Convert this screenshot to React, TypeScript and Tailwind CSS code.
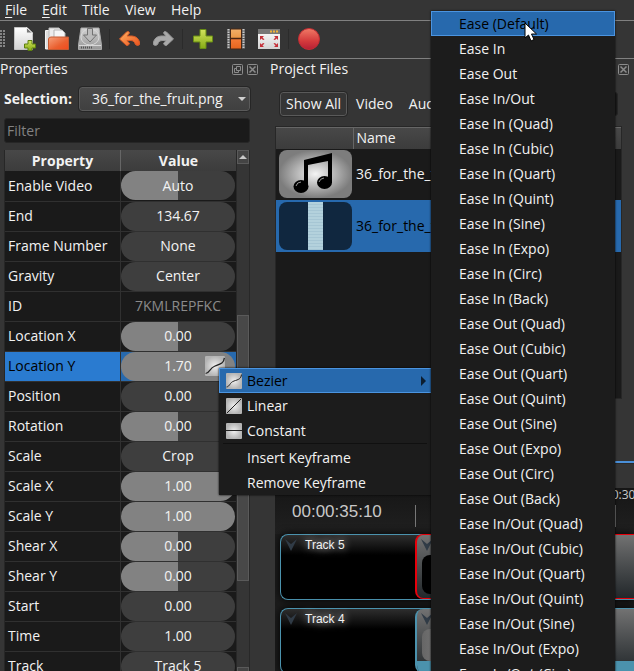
import type { ReactNode } from "react";

type Row = { name: string; value: string; fill?: "half" | "full" | "plain" | "none"; active?: boolean };

const rows: Row[] = [
  { name: "Enable Video", value: "Auto", fill: "half" },
  { name: "End", value: "134.67" },
  { name: "Frame Number", value: "None" },
  { name: "Gravity", value: "Center" },
  { name: "ID", value: "7KMLREPFKC", fill: "none" },
  { name: "Location X", value: "0.00", fill: "half" },
  { name: "Location Y", value: "1.70", fill: "full", active: true },
  { name: "Position", value: "0.00" },
  { name: "Rotation", value: "0.00", fill: "half" },
  { name: "Scale", value: "Crop" },
  { name: "Scale X", value: "1.00", fill: "full" },
  { name: "Scale Y", value: "1.00", fill: "full" },
  { name: "Shear X", value: "0.00", fill: "half" },
  { name: "Shear Y", value: "0.00", fill: "half" },
  { name: "Start", value: "0.00" },
  { name: "Time", value: "1.00" },
  { name: "Track", value: "Track 5" },
];

const kinds = ["Quad", "Cubic", "Quart", "Quint", "Sine", "Expo", "Circ", "Back"];
const eases = [
  "Ease In",
  "Ease Out",
  "Ease In/Out",
  ...kinds.map((k) => `Ease In (${k})`),
  ...kinds.map((k) => `Ease Out (${k})`),
  ...kinds.map((k) => `Ease In/Out (${k})`),
];

const pillStyles = {
  half: "bg-[linear-gradient(90deg,#828282_50%,#3e3e3e_50%)]",
  full: "bg-[#828282]",
  plain: "bg-[#3e3e3e]",
  none: "text-[#8a8a8a]",
};

function Tool({ label, children }: { label: string; children: ReactNode }) {
  return (
    <button aria-label={label} className="flex h-8 w-[33px] items-center justify-center">
      <svg width="24" height="24" viewBox="0 0 24 24">{children}</svg>
    </button>
  );
}

function Separator() {
  return <div className="mx-[3px] h-5 w-px bg-[#2b2b2b]" />;
}

function Toolbar() {
  return (
    <div className="flex h-[38px] shrink-0 items-center border-b border-[#808080] pb-px">
      <svg width="7" height="18" viewBox="0 0 7 18" fill="#858585">
        {[0, 3, 6, 9, 12, 15].map((y) => (
          <g key={y}>
            <rect x="0" y={y} width="2" height="2" />
            <rect x="3" y={y} width="2" height="2" />
          </g>
        ))}
      </svg>
      <Tool label="New Project">
        <defs>
          <linearGradient id="paper" x1="0" y1="0" x2="0" y2="1">
            <stop offset="0" stopColor="#fff" />
            <stop offset="1" stopColor="#d2d2d2" />
          </linearGradient>
          <linearGradient id="lime" x1="0" y1="0" x2="0" y2="1">
            <stop offset="0" stopColor="#d2e35c" />
            <stop offset="1" stopColor="#86ab16" />
          </linearGradient>
        </defs>
        <path d="M2.500 0.500H15L20.500 6V22.500H2.500Z" fill="url(#paper)" stroke="#c4c4c4" />
        <path d="M14.500 0.500V6H20.500Z" fill="#777" stroke="#eee" />
        <path d="M16 13.500H20V17H23.500V21H20V23.500H16V21H12.500V17H16Z" fill="url(#lime)" stroke="#5d800f" />
      </Tool>
      <Tool label="Open Project">
        <defs>
          <linearGradient id="folder" x1="0" y1="0" x2="1" y2="1">
            <stop offset="0" stopColor="#f7a27c" />
            <stop offset="0.600" stopColor="#ea6030" />
            <stop offset="1" stopColor="#f2491b" />
          </linearGradient>
        </defs>
        <path d="M0.500 3.500H6V22H0.500Z" fill="#ddd" stroke="#f3f3f3" />
        <path d="M4 1H14L18 5V12H4Z" fill="#ececec" stroke="#bbb" />
        <path d="M9 3H17L20 6V13H9Z" fill="#f6f6f6" stroke="#b5b5b5" />
        <path d="M3.500 22.500V12Q4 10 6 10H23.500V22.500Z" fill="url(#folder)" stroke="#c45a32" />
      </Tool>
      <Tool label="Save Project">
        <defs>
          <linearGradient id="disk" x1="0" y1="0" x2="0" y2="1">
            <stop offset="0" stopColor="#d2d2d2" />
            <stop offset="1" stopColor="#989898" />
          </linearGradient>
        </defs>
        <path d="M3 1H21L23.500 18V22.500H0.500V18Z" fill="url(#disk)" stroke="#aaa" />
        <ellipse cx="12" cy="10" rx="9" ry="8" fill="none" stroke="#d8d8d8" />
        <path d="M9.500 1.500H14.500V8H18.500L12 15L5.500 8H9.500Z" fill="#bbb" stroke="#727272" />
        <path d="M1 18.500H23" stroke="#d8d8d8" />
        <path d="M3 20.500H14" stroke="#555" strokeWidth="2" strokeDasharray="1 1" />
      </Tool>
      <Separator />
      <Tool label="Undo">
        <defs>
          <linearGradient id="undo" x1="0" y1="0" x2="1" y2="1">
            <stop offset="0" stopColor="#ffb463" />
            <stop offset="1" stopColor="#ea501c" />
          </linearGradient>
        </defs>
        <path d="M1.500 12L8.500 5Q11 3.500 11.500 6L9 9H14Q20 9.500 21.500 15Q22.500 18.500 19.500 18.500Q17 18 16.500 15.500Q15.500 13.500 13 13.500H9L11.500 16.500Q10.500 19 8.500 18.500Z" fill="url(#undo)" stroke="#d65a28" />
      </Tool>
      <Tool label="Redo">
        <path d="M22.500 12L15.500 5Q13 3.500 12.500 6L15 9H10Q4 9.500 2.500 15Q1.500 18.500 4.500 18.500Q7 18 7.500 15.500Q8.500 13.500 11 13.500H15L12.500 16.500Q13.500 19 15.500 18.500Z" fill="#a9a9a9" stroke="#969696" />
      </Tool>
      <Separator />
      <Tool label="Import Files">
        <path d="M9 2.500H15V9H21.500V15H15V21.500H9V15H2.500V9H9Z" fill="url(#lime)" stroke="#688c15" />
      </Tool>
      <Tool label="Choose Profile">
        <defs>
          <linearGradient id="film" x1="0" y1="0" x2="0" y2="1">
            <stop offset="0" stopColor="#f3b06a" />
            <stop offset="0.500" stopColor="#eb9542" />
            <stop offset="0.510" stopColor="#f47a35" />
            <stop offset="1" stopColor="#e6641e" />
          </linearGradient>
        </defs>
        <path d="M3 2H21V22H3Z" fill="#555" />
        <path d="M4.500 2V22M19.500 2V22" stroke="#c9c9c9" strokeWidth="2" strokeDasharray="1.500 1" />
        <path d="M6.500 2H17.500V22H6.500Z" fill="url(#film)" stroke="#442819" />
        <path d="M6 11.500H18" stroke="#4a2613" strokeWidth="1.500" />
      </Tool>
      <Tool label="Fullscreen">
        <path d="M1 2H23V22H1Z" fill="url(#paper)" />
        <path d="M1 2H23V7H1Z" fill="#777" />
        <path d="M13 4.500H21" stroke="#f0b43a" strokeWidth="2" strokeDasharray="2 1" />
        <path d="M3 9H7L5.500 10.500L7.500 12.500L6 13L4.500 11.500L3 13ZM21 9H17L18.500 10.500L16.500 12.500L18 13L19.500 11.500L21 13ZM3 20H7L5.500 18.500L7.500 16.500L6 16L4.500 17.500L3 16ZM21 20H17L18.500 18.500L16.500 16.500L18 16L19.500 17.500L21 16Z" fill="#c42f38" />
      </Tool>
      <Separator />
      <Tool label="Export Video">
        <defs>
          <linearGradient id="rec" x1="0" y1="0" x2="0" y2="1">
            <stop offset="0" stopColor="#f07a66" />
            <stop offset="0.600" stopColor="#d43a3c" />
            <stop offset="1" stopColor="#b51f35" />
          </linearGradient>
        </defs>
        <circle cx="12" cy="12" r="10.500" fill="url(#rec)" stroke="#c22c33" />
      </Tool>
    </div>
  );
}

function DockClose() {
  return (
    <button aria-label="Close panel">
      <svg width="11" height="11" viewBox="0 0 11 11" fill="none" stroke="#8c8c8c">
        <rect x="0.500" y="0.500" width="10" height="10" rx="1" />
        <path d="M2.500 2.500L8.500 8.500M8.500 2.500L2.500 8.500" strokeWidth="1.500" />
      </svg>
    </button>
  );
}

function DockFloat() {
  return (
    <button aria-label="Float panel">
      <svg width="11" height="11" viewBox="0 0 11 11" fill="none" stroke="#8c8c8c">
        <rect x="0.500" y="0.500" width="10" height="10" rx="1" />
        <path d="M4.500 2.500H8.500V6.500H4.500ZM4.500 4.500H2.500V8.500H6.500V6.500" />
      </svg>
    </button>
  );
}

function CurveIcon({ d, className }: { d: string; className: string }) {
  return (
    <svg viewBox="0 0 16 16" className={className}>
      <defs>
        <radialGradient id="glow">
          <stop offset="0" stopColor="#f0f0f0" />
          <stop offset="1" stopColor="#b4b4b4" />
        </radialGradient>
      </defs>
      <rect width="16" height="16" rx="1" fill="url(#glow)" />
      <path d={d} fill="none" stroke="#222" strokeWidth="1" />
    </svg>
  );
}

const bezier = "M0.500 14C4 13.500 3.500 9.500 8 8C12.500 6.500 15 6 15.500 1.500";

function Properties() {
  return (
    <section className="flex w-[258px] shrink-0 flex-col">
      <header className="flex h-5 shrink-0 items-center gap-1">
        <h2 className="flex-1">Properties</h2>
        <DockFloat />
        <DockClose />
      </header>
      <div className="mt-2 mr-2 flex h-6 shrink-0 items-center pl-1">
        <label htmlFor="selection" className="w-[75px] font-bold">Selection:</label>
        <div className="relative flex-1">
          <select id="selection" className="block h-6 w-full appearance-none rounded-[3px] border border-[#5a5a5a] bg-linear-to-b from-[#4a4a4a] to-[#404040] pl-3 outline outline-[#262626]">
            <option>36_for_the_fruit.png</option>
          </select>
          <svg width="8" height="4" viewBox="0 0 8 4" className="pointer-events-none absolute top-2.5 right-1" fill="#d0d0d0"><path d="M0 0H8L4 4Z" /></svg>
        </div>
      </div>
      <input aria-label="Filter" placeholder="Filter" className="mt-[7px] mr-2 ml-1 h-[25px] shrink-0 rounded-[3px] border border-[#262626] bg-[#1a1a1a] px-0.5 placeholder:text-[#828282]" />
      <div className="mt-[7px] mr-2 ml-1 flex min-h-0 flex-1 overflow-hidden border-l border-[#272727]">
        <div className="min-w-0 flex-1">
          <table className="w-full table-fixed border-collapse bg-[#1a1a1a]">
            <thead>
              <tr className="h-[21px] bg-linear-to-b from-[#484848] to-[#3c3c3c]">
                <th className="h-[21px] border-r border-[#666] p-0 leading-5">Property</th>
                <th className="p-0 leading-5">Value</th>
              </tr>
            </thead>
            <tbody>
              {rows.map((r) => (
                <tr key={r.name} className={r.active ? "h-[30px] bg-[#2769ad] text-black" : "h-[30px]"}>
                  <td className={`border-r border-b border-[#303030] p-0 pl-[3px] leading-5 ${r.active ? "bg-[#2a7bd0]" : ""}`}>{r.name}</td>
                  <td className="border-b border-[#303030] p-0 pr-px">
                    <div className={`flex h-[29px] items-center justify-center rounded-full text-[#f2f2f2] ${pillStyles[r.fill ?? "plain"]}`}>
                      {r.active ? (
                        <div className="grid flex-1 grid-cols-[1fr_auto_1fr] items-center">
                          <span />
                          <span>{r.value}</span>
                          <CurveIcon d={bezier} className="mr-[10px] size-5 justify-self-end" />
                        </div>
                      ) : (
                        <span className={r.fill === "none" ? "text-[#8a8a8a]" : ""}>{r.value}</span>
                      )}
                    </div>
                  </td>
                </tr>
              ))}
            </tbody>
          </table>
        </div>
        <div className="flex w-[14px] shrink-0 flex-col border-x border-[#282828] bg-[#353535]">
          <button aria-label="Scroll up" className="flex h-[14px] items-center justify-center border border-[#5a5a5a] bg-[#444]">
            <svg width="8" height="4" viewBox="0 0 8 4" fill="#c8c8c8"><path d="M0 4H8L4 0Z" /></svg>
          </button>
          <div className="h-[151px]" />
          <div className="h-[266px] border border-[#5a5a5a] bg-[#484848]" />
          <div className="min-h-0 flex-1" />
          <div className="h-1 border border-b-0 border-[#5a5a5a] bg-[#444]" />
        </div>
      </div>
    </section>
  );
}

function ProjectFiles() {
  return (
    <section>
      <header className="flex h-5 items-center pr-[5px] pl-3">
        <h2 className="flex-1">Project Files</h2>
        <DockClose />
      </header>
      <div className="mt-[13px] mr-4 ml-[22px] flex h-6 gap-0.5">
        <button className="rounded-[3px] border border-[#5a5a5a] px-[5px] outline outline-[#262626]">Show All</button>
        <button className="px-[7px]">Video</button>
        <button className="px-[7px]">Audio</button>
        <input aria-label="Search files" className="min-w-0 flex-1 rounded-[3px] border border-[#262626] bg-[#1a1a1a]" />
      </div>
      <div className="mt-[10px] mr-3 ml-[17px] h-[273px] border border-[#272727] bg-[#1a1a1a]">
        <table className="w-full table-fixed border-collapse">
          <thead>
            <tr className="bg-linear-to-b from-[#484848] to-[#3c3c3c] text-left">
              <th className="h-[21px] w-[77px] border-t border-r border-[#666] p-0" aria-label="Thumbnail" />
              <th className="h-[21px] border-t border-[#666] p-0 pl-[3px] leading-5 font-normal">Name</th>
            </tr>
          </thead>
          <tbody>
            <tr className="h-[51px]">
              <td className="p-0 pl-[3px]">
                <svg width="73" height="48" viewBox="0 0 73 48" className="block">
                  <defs>
                    <radialGradient id="sheen">
                      <stop offset="0" stopColor="#f4f4f4" />
                      <stop offset="1" stopColor="#7d7d7d" />
                    </radialGradient>
                  </defs>
                  <rect width="73" height="48" rx="8" fill="url(#sheen)" />
                  <path d="M25 10L53 3V33H49V11L29 15V37H25Z" />
                  <ellipse cx="22" cy="36.500" rx="7.500" ry="6.500" />
                  <ellipse cx="45.500" cy="32.500" rx="7.500" ry="6.500" />
                  <path d="M17 36Q18 32 22 32M40 32Q41 28.500 45 28" fill="none" stroke="#999" />
                </svg>
              </td>
              <td className="overflow-hidden p-0 pl-[3px] whitespace-nowrap">36_for_the_fruit.mp3</td>
            </tr>
            <tr className="h-[52px] bg-[#2769ad] text-black">
              <td className="p-0 pl-[3px]">
                <div className="flex h-12 w-[73px] justify-center overflow-hidden rounded-lg bg-[#10273f]">
                  <div className="w-[15px] bg-[repeating-linear-gradient(#b3d1dc_0_2px,#a6c6d4_2px_3px)]" />
                </div>
              </td>
              <td className="overflow-hidden p-0 pl-[3px] whitespace-nowrap">36_for_the_fruit.png</td>
            </tr>
          </tbody>
        </table>
      </div>
    </section>
  );
}

function Arrow() {
  return (
    <svg width="12" height="12" viewBox="0 0 12 12" fill="#303b46"><path d="M0 0L6 12L12 0L6 5Z" /></svg>
  );
}

function Track({ name, selected }: { name: string; selected?: boolean }) {
  return (
    <div className="flex h-[66px] shrink-0 rounded-l-lg border border-r-0 border-[#4b92ad] bg-black bg-[linear-gradient(#2e2e2e,#000_20px)] shadow-[0_0_8px_#000]">
      <div className="flex w-[134px] shrink-0 gap-2 pt-1 pl-1">
        <Arrow />
        <h3 className="font-['Liberation_Sans',sans-serif] text-xs leading-3 [text-shadow:0_0_8px_#fff]">{name}</h3>
      </div>
      <div className={`flex flex-1 flex-col overflow-hidden rounded-l-lg border-r-0 bg-linear-to-b from-[#727272] to-[#23282b] ${selected ? "-mt-px h-[65px] border-y border-l-2 border-red-600" : "border-l-2 border-[#4b92ad]"}`}>
        <div className="pt-1 pl-1"><Arrow /></div>
        <div className={`mt-1 ml-[5px] w-16 flex-1 rounded-lg ${selected ? "mb-1 bg-black" : "bg-linear-to-r from-[#666] to-[#aaa]"}`} />
        {!selected && <div className="h-3 bg-[#4b92ad]" />}
      </div>
    </div>
  );
}

function Timeline() {
  return (
    <section className="mt-[62px] flex min-h-0 flex-1 flex-col">
      <div className="ml-[17px] h-[3px] shrink-0 border-b border-[#2a2a2a] bg-[#4a8fd8]" />
      <div className="mt-6 ml-[17px] flex min-h-0 flex-1 flex-col overflow-hidden bg-[#1c1c1c]">
        <div className="flex h-[46px] shrink-0 bg-linear-to-b from-[#161616] to-[#202020] text-[#c8c8c8]">
          <div className="w-[140px] shrink-0 pt-[14px] pl-[17px] font-['Liberation_Sans',sans-serif] text-[17px] leading-5">00:00:35:10</div>
          <div className="mt-[17px] h-[22px] w-[200px] shrink-0 border-l border-[#777]" />
          <div className="relative mt-[17px] h-[22px] flex-1 border-l border-[#777]">
            <span className="absolute -top-4 -left-7 text-xs leading-3">00:00:30</span>
          </div>
        </div>
        <div className="flex flex-col gap-2 pl-[5px]">
          <Track name="Track 5" selected />
          <Track name="Track 4" />
        </div>
      </div>
    </section>
  );
}

const itemBase = "flex h-[25px] w-full items-center text-left";

function ContextMenu() {
  return (
    <div role="menu" className="absolute top-[368px] left-[219px] w-[212px] bg-[#1c1c1c] shadow-[0_0_2px_#000]">
      <button role="menuitem" className={`${itemBase} gap-[5px] border border-r-0 border-[#4b94e0] bg-[#2769ad] pl-1.5 text-black`}>
        <CurveIcon d={bezier} className="size-4" />
        <span className="flex-1">Bezier</span>
        <svg width="5" height="10" viewBox="0 0 5 10" className="mr-[5px]" fill="#0c1e30"><path d="M0 0L5 5L0 10Z" /></svg>
      </button>
      <button role="menuitem" className={`${itemBase} gap-[5px] pl-[7px]`}>
        <CurveIcon d="M1 15L15 1" className="size-4" />Linear
      </button>
      <button role="menuitem" className={`${itemBase} gap-[5px] pl-[7px]`}>
        <CurveIcon d="M0 7.500H16" className="size-4" />Constant
      </button>
      <div className="mx-1 mb-px h-px bg-[#101010]" />
      <button role="menuitem" className={`${itemBase} pl-7`}>Insert Keyframe</button>
      <button role="menuitem" className={`${itemBase} pl-7`}>Remove Keyframe</button>
    </div>
  );
}

function EaseMenu() {
  return (
    <div role="menu" className="absolute top-[11px] left-[431px] w-[184px] bg-[#1c1c1c] shadow-[0_0_2px_#000]">
      <button role="menuitem" className={`${itemBase} border border-[#4b94e0] bg-[#2769ad] pl-[27px] text-black`}>Ease (Default)</button>
      {eases.map((e) => (
        <button key={e} role="menuitem" className={`${itemBase} pl-7`}>{e}</button>
      ))}
    </div>
  );
}

export default function App() {
  return (
    <div className="relative flex h-screen flex-col overflow-hidden bg-[#353535] font-['Open_Sans',sans-serif] text-sm leading-5 text-[#f2f2f2]">
      <nav className="flex h-[21px] shrink-0 border-b border-[#808080] pl-[5px] leading-[18px]">
        <button className="w-[37px] text-left"><u className="underline-offset-2">F</u>ile</button>
        <button className="w-10 text-left"><u className="underline-offset-2">E</u>dit</button>
        <button className="w-[43px] text-left">Title</button>
        <button className="w-[46px] text-left">View</button>
        <button className="text-left">Help</button>
      </nav>
      <Toolbar />
      <main className="flex min-h-0 flex-1">
        <Properties />
        <div className="flex min-w-0 flex-1 flex-col">
          <ProjectFiles />
          <Timeline />
        </div>
      </main>
      <ContextMenu />
      <EaseMenu />
      <svg width="14" height="20" viewBox="0 0 14 20" className="pointer-events-none absolute top-[22px] left-[524px]">
        <path d="M1 1V16L4.500 13L7 19L10 17.500L7.500 12H12.500Z" fill="#fff" stroke="#000" />
      </svg>
    </div>
  );
}
